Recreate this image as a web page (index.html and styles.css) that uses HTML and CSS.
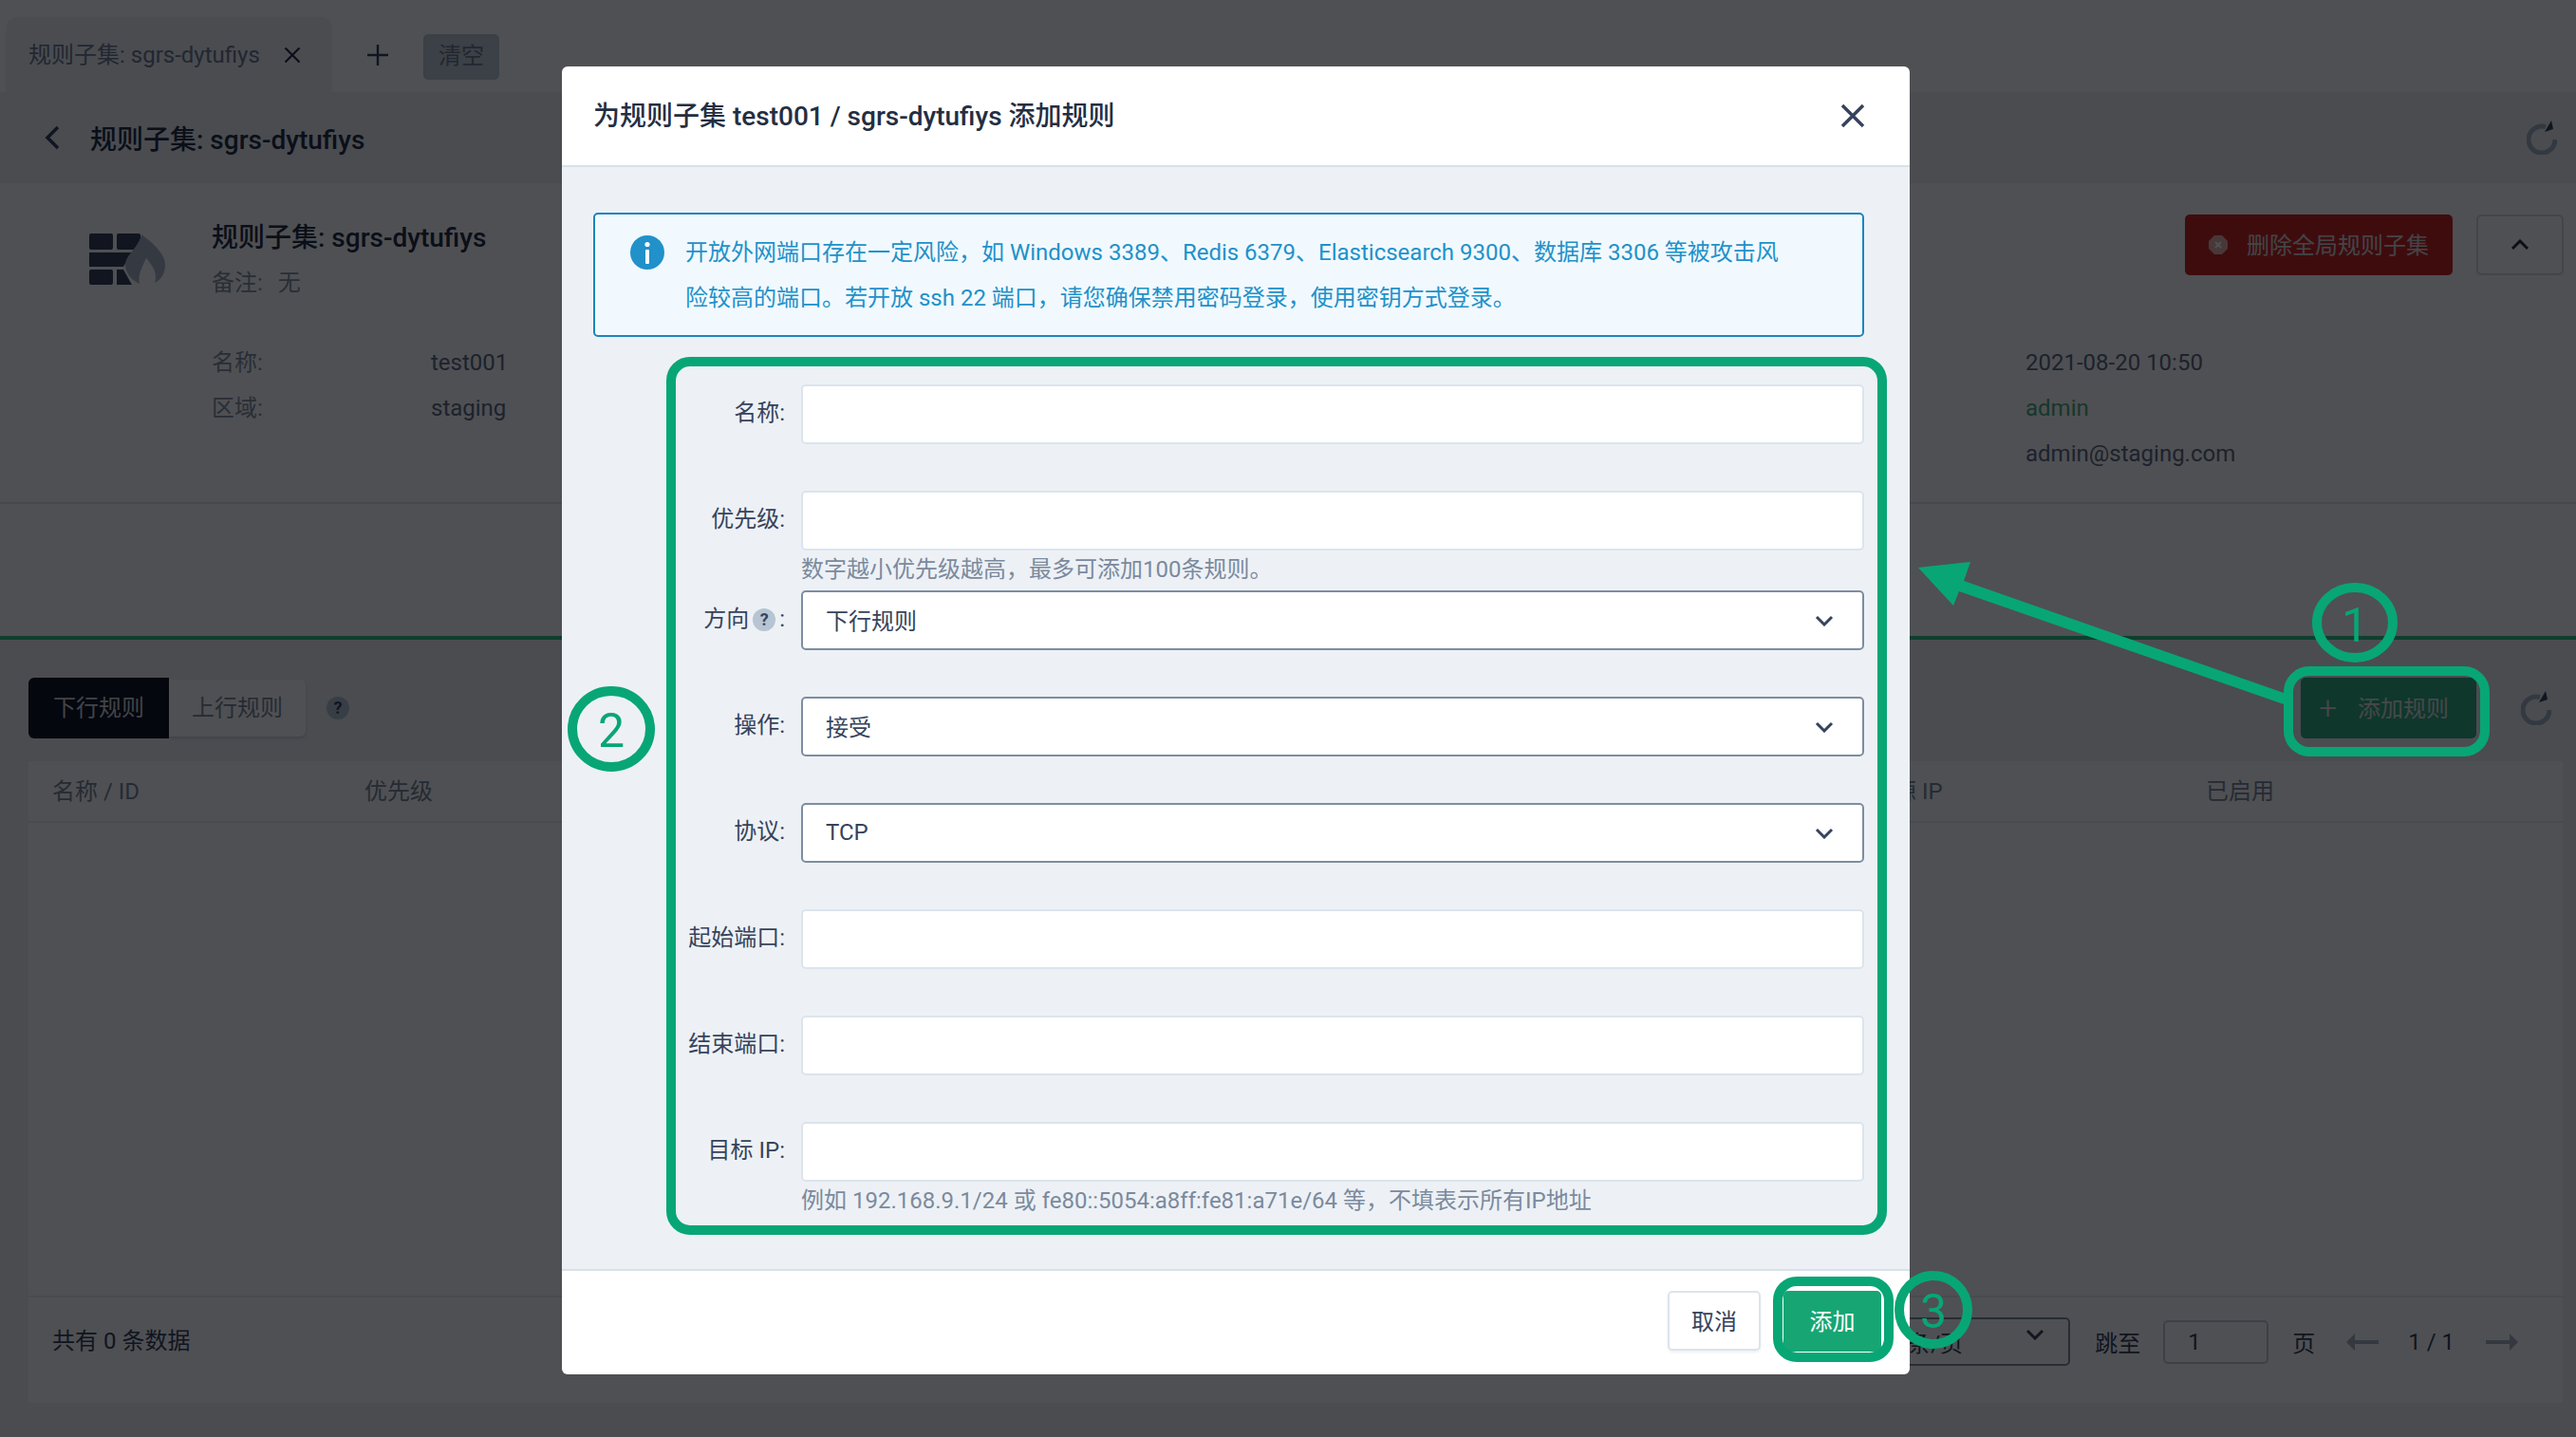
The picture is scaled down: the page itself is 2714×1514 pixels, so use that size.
FILE: index.html
```html
<!DOCTYPE html>
<html lang="zh-CN">
<head>
    <meta charset="UTF-8">
    <title>规则子集</title>
    <link rel="stylesheet" href="styles.css">
</head>
<body>

    <div class="tabbar">
        <div class="tab">
            <span>规则子集: sgrs-dytufiys</span>
            <svg class="tab-close" viewBox="0 0 24 24"><path d="M3 3 21 21M21 3 3 21"/></svg>
        </div>
        <svg class="tab-add" viewBox="0 0 24 24"><path d="M12 1V23M1 12H23"/></svg>
        <div class="tab-clear">清空</div>
    </div>

    <div class="page-head">
        <svg class="back" viewBox="0 0 18 28"><path d="M15 3 4 14 15 25"/></svg>
        <h1>规则子集: sgrs-dytufiys</h1>
        <svg class="refresh" viewBox="0 0 32 36"><path class="refresh-arc" d="M30 20A14 14 0 1 1 20 6.6"/><path class="refresh-tip" d="M26 0 19 12 28 9Z"/></svg>
    </div>

    <div class="info">
        <svg class="info-icon" viewBox="0 0 80 56">
            <g class="bricks">
                <rect x="0" y="1" width="25" height="17" rx="2"/>
                <rect x="29" y="1" width="25" height="17" rx="2"/>
                <path d="M0 21H45L36 36H0Z"/>
                <rect x="0" y="39" width="25" height="16" rx="2"/>
                <path d="M29 39H36L45 55H29Z"/>
            </g>
            <path class="flame" d="M55 2C66 10 80 22 80 34 80 44 75 50 69 53 72 44 68 36 60 27 56 36 51 44 53 54 44 50 38 42 38 34 38 24 52 16 55 2Z"/>
        </svg>
        <div class="info-main">
            <div class="info-head">
                <div>
                    <h2>规则子集: sgrs-dytufiys</h2>
                    <div class="note">备注:&nbsp; 无</div>
                </div>
                <div class="info-actions">
                    <button class="btn-danger">
                        <svg viewBox="0 0 20 20"><path class="octagon" d="M6 0H14L20 6V14L14 20H6L0 14V6Z"/><path class="octagon-x" d="M7 7 13 13M13 7 7 13"/></svg>
                        删除全局规则子集
                    </button>
                    <button class="btn-collapse"><svg viewBox="0 0 20 12"><path d="M2 10 10 2 18 10"/></svg></button>
                </div>
            </div>
            <div class="info-details">
                <div class="detail-list">
                    <span class="detail-label">名称:</span><span>test001</span>
                    <span class="detail-label">区域:</span><span>staging</span>
                </div>
                <div class="detail-right">
                    <span>2021-08-20 10:50</span>
                    <span class="green-text">admin</span>
                    <span>admin@staging.com</span>
                </div>
            </div>
        </div>
    </div>

    <div class="tab-strip"></div>

    <div class="rules">
        <div class="toolbar">
            <div class="segment">
                <div class="segment-on">下行规则</div>
                <div class="segment-off">上行规则</div>
            </div>
            <span class="help help-page">?</span>
            <button class="btn-add"><span class="plus">+</span>添加规则</button>
            <svg class="refresh" viewBox="0 0 32 36"><path class="refresh-arc" d="M30 20A14 14 0 1 1 20 6.6"/><path class="refresh-tip" d="M26 0 19 12 28 9Z"/></svg>
        </div>
        <div class="table">
            <div class="table-head">
                <span class="col-name">名称 / ID</span>
                <span class="col-priority">优先级</span>
                <span class="col-ip">源 IP</span>
                <span>已启用</span>
            </div>
            <div class="table-body"></div>
            <div class="table-foot">
                <span class="total">共有 0 条数据</span>
                <div class="pager">
                    <div class="page-size">10 条/页<svg viewBox="0 0 20 12"><path d="M2 2 10 10 18 2"/></svg></div>
                    <span class="jump-label">跳至</span>
                    <div class="jump-input">1</div>
                    <span class="jump-unit">页</span>
                    <svg class="page-arrow" viewBox="0 0 34 18"><path d="M0 9 9 0V7H34V11H9V18Z"/></svg>
                    <span class="page-count">1 / 1</span>
                    <svg class="page-arrow" viewBox="0 0 34 18"><path d="M34 9 25 0V7H0V11H25V18Z"/></svg>
                </div>
            </div>
        </div>
    </div>

    <div class="mask">
        <div class="modal">
            <div class="modal-head">
                <h3>为规则子集 test001 / sgrs-dytufiys 添加规则</h3>
                <svg class="modal-close" viewBox="0 0 26 26"><path d="M2 2 24 24M24 2 2 24"/></svg>
            </div>
            <div class="modal-body">
                <div class="alert">
                    <svg class="alert-icon" viewBox="0 0 36 36"><circle cx="18" cy="18" r="18"/><circle class="dot" cx="18" cy="9.5" r="2.6"/><rect class="dot" x="16" y="15" width="4" height="15" rx="1"/></svg>
                    <p>开放外网端口存在一定风险，如 Windows 3389、Redis 6379、Elasticsearch 9300、数据库 3306 等被攻击风险较高的端口。若开放 ssh 22 端口，请您确保禁用密码登录，使用密钥方式登录。</p>
                </div>
                <div class="form">
                    <div class="form-row">
                        <label>名称:</label>
                        <div class="form-field"><div class="input"></div></div>
                    </div>
                    <div class="form-row has-hint">
                        <label>优先级:</label>
                        <div class="form-field">
                            <div class="input"></div>
                            <div class="hint">数字越小优先级越高，最多可添加100条规则。</div>
                        </div>
                    </div>
                    <div class="form-row">
                        <label>方向<span class="help help-label">?</span>:</label>
                        <div class="form-field">
                            <div class="select">下行规则<svg viewBox="0 0 20 12"><path d="M2 2 10 10 18 2"/></svg></div>
                        </div>
                    </div>
                    <div class="form-row">
                        <label>操作:</label>
                        <div class="form-field">
                            <div class="select">接受<svg viewBox="0 0 20 12"><path d="M2 2 10 10 18 2"/></svg></div>
                        </div>
                    </div>
                    <div class="form-row">
                        <label>协议:</label>
                        <div class="form-field">
                            <div class="select">TCP<svg viewBox="0 0 20 12"><path d="M2 2 10 10 18 2"/></svg></div>
                        </div>
                    </div>
                    <div class="form-row">
                        <label>起始端口:</label>
                        <div class="form-field"><div class="input"></div></div>
                    </div>
                    <div class="form-row">
                        <label>结束端口:</label>
                        <div class="form-field"><div class="input"></div></div>
                    </div>
                    <div class="form-row has-hint">
                        <label>目标 IP:</label>
                        <div class="form-field">
                            <div class="input"></div>
                            <div class="hint">例如 192.168.9.1/24 或 fe80::5054:a8ff:fe81:a71e/64 等，不填表示所有IP地址</div>
                        </div>
                    </div>
                </div>
            </div>
            <div class="modal-foot">
                <button class="btn-cancel">取消</button>
                <button class="btn-submit">添加</button>
            </div>
        </div>
    </div>

    <!-- green marks drawn over the screenshot -->
    <svg class="marks" viewBox="0 0 2714 1514">
        <rect class="mark-line" x="707" y="381" width="1276" height="915" rx="20"/>
        <rect class="mark-line" x="2411" y="707" width="207" height="85" rx="22"/>
        <rect class="mark-line" x="1873" y="1350" width="117" height="80" rx="20"/>
        <ellipse class="mark-line" cx="2481" cy="656" rx="40" ry="37"/>
        <ellipse class="mark-line" cx="644" cy="768" rx="41" ry="40"/>
        <ellipse class="mark-line" cx="2037" cy="1380" rx="36" ry="36"/>
        <path class="mark-fill" d="M2021 598 2076 592 2069 612 2406 730V742L2064 623 2058 638Z"/>
        <text class="mark-num" x="2481" y="676">1</text>
        <text class="mark-num" x="644" y="787">2</text>
        <text class="mark-num" x="2037" y="1399">3</text>
    </svg>

</body>
</html>
```

FILE: styles.css
```css
* {
    box-sizing: border-box;
}
body {
    font-family: Roboto, "Noto Sans CJK SC", sans-serif;
    font-size: 24px;
    color: #5d6b84;
    background-color: #edf1f5;
    margin: 0;
    width: 2714px;
    height: 1514px;
    overflow: hidden;
    position: relative;
}
button {
    font: inherit;
    border: none;
    padding: 0;
}
h1, h2, h3 {
    margin: 0;
    font-size: 28px;
    font-weight: 500;
    color: #242e42;
}

/* top tabs */
.tabbar {
    height: 97px;
    padding: 18px 0 0 6px;
    background-color: #fff;
    display: flex;
    align-items: flex-start;
}
.tab {
    width: 344px;
    height: 79px;
    padding: 16px 0 0 24px;
    background-color: #edf1f5;
    border-radius: 12px 12px 0 0;
    color: #6f7c90;
    display: flex;
    align-items: flex-start;
    line-height: 48px;
}
.tab-close {
    width: 20px;
    height: 20px;
    margin: 14px 0 0 24px;
    fill: none;
    stroke: #242e42;
    stroke-width: 2.6;
}
.tab-add {
    width: 24px;
    height: 24px;
    margin: 28px 0 0 36px;
    fill: none;
    stroke: #36435c;
    stroke-width: 2.4;
}
.tab-clear {
    width: 80px;
    height: 48px;
    margin: 18px 0 0 36px;
    background-color: #bfcdd6;
    border-radius: 5px;
    text-align: center;
    line-height: 46px;
    color: #6f7c90;
}

/* page header */
.page-head {
    height: 96px;
    padding: 0 20px 0 46px;
    background-color: #edf1f5;
    display: flex;
    align-items: center;
}
.back {
    width: 18px;
    height: 28px;
    margin-right: 31px;
    fill: none;
    stroke: #36435c;
    stroke-width: 3.5;
}
.page-head h1 {
    flex: 1;
}
.refresh {
    width: 32px;
    height: 36px;
    flex: none;
}
.refresh-arc {
    fill: none;
    stroke: #a6b4c4;
    stroke-width: 5;
}
.refresh-tip {
    fill: #36435c;
}

/* summary */
.info {
    height: 338px;
    padding: 33px 13px 0 94px;
    background-color: #fff;
    border-bottom: 2px solid #e3e9ef;
    display: flex;
}
.info-icon {
    width: 80px;
    height: 56px;
    margin: 19px 49px 0 0;
    flex: none;
}
.bricks {
    fill: #36435c;
}
.flame {
    fill: #abb8c7;
}
.info-main {
    flex: 1;
}
.info-head {
    height: 96px;
    display: flex;
    justify-content: space-between;
}
.info-head h2 {
    line-height: 49px;
}
.note {
    line-height: 47px;
    color: #8592a6;
    word-spacing: 2px;
}
.info-actions {
    display: flex;
    gap: 25px;
}
.btn-danger {
    width: 282px;
    height: 64px;
    padding: 0 0 3px 25px;
    background-color: #ca2621;
    color: #d9d9dc;
    border-radius: 5px;
    display: flex;
    align-items: center;
    gap: 20px;
}
.btn-danger svg {
    width: 20px;
    height: 20px;
    margin-top: 3px;
}
.octagon {
    fill: #e8b0ad;
}
.octagon-x {
    fill: none;
    stroke: #fff;
    stroke-width: 2;
}
.btn-collapse {
    width: 92px;
    height: 64px;
    padding-bottom: 4px;
    background-color: #fff;
    border: 2px solid #d1dbe5;
    border-radius: 5px;
}
.btn-collapse svg {
    width: 20px;
    height: 12px;
    fill: none;
    stroke: #242e42;
    stroke-width: 3;
}
.info-details {
    margin-top: 36px;
    display: flex;
    justify-content: space-between;
}
.detail-list {
    display: grid;
    grid-template-columns: 231px auto;
    grid-auto-rows: 48px;
    line-height: 48px;
}
.detail-label {
    color: #8592a6;
}
.detail-right {
    width: 567px;
    display: flex;
    flex-direction: column;
    line-height: 48px;
}
.green-text {
    color: #4caf7d;
}
.tab-strip {
    height: 143px;
    background-color: #fff;
    border-bottom: 4px solid #30c587;
}

/* rules table */
.rules {
    height: 802px;
    padding-top: 40px;
    background-color: #edf1f5;
}
.toolbar {
    height: 64px;
    padding: 0 26px 0 30px;
    display: flex;
    align-items: center;
}
.segment {
    display: flex;
    height: 64px;
    align-items: center;
    color: #79879c;
}
.segment-on {
    width: 148px;
    height: 64px;
    background-color: #0d1520;
    border-radius: 6px 0 0 6px;
    text-align: center;
    line-height: 64px;
    color: #d2d6da;
}
.segment-off {
    width: 144px;
    height: 60px;
    background-color: #fff;
    border-radius: 0 6px 6px 0;
    box-shadow: 0 2px 3px rgba(36, 46, 66, 0.15);
    text-align: center;
    line-height: 60px;
}
.help {
    display: inline-block;
    width: 24px;
    height: 24px;
    border-radius: 50%;
    background-color: #b6c4d3;
    color: #36435c;
    font-size: 18px;
    font-weight: 700;
    line-height: 24px;
    text-align: center;
    vertical-align: 1px;
}
.help-page {
    margin: 0 auto 0 22px;
}
.help-label {
    margin: 0 4px;
}
.btn-add {
    width: 185px;
    height: 64px;
    margin-right: 47px;
    padding: 0 0 3px 19px;
    background-color: #30ae7f;
    color: #e0e4e2;
    border-radius: 5px;
    display: flex;
    align-items: center;
}
.plus {
    width: 41px;
    font-size: 34px;
    font-weight: 300;
    text-align: left;
}
.table {
    height: 676px;
    margin: 24px 14px 0 30px;
    background-color: #fff;
    display: flex;
    flex-direction: column;
}
.table-head {
    height: 65px;
    padding: 0 0 4px 25px;
    background-color: #fff;
    border-bottom: 2px solid #e8edf2;
    color: #79879c;
    display: flex;
    align-items: center;
}
.col-name {
    width: 329px;
}
.col-priority {
    width: 1611px;
}
.col-ip {
    width: 329px;
}
.table-body {
    height: 500px;
    border-bottom: 2px solid #e8edf2;
}
.table-foot {
    flex: 1;
    padding: 21px 47px 0 25px;
    display: flex;
    justify-content: space-between;
    align-items: flex-start;
}
.total {
    line-height: 51px;
    color: #36435c;
}
.pager {
    height: 51px;
    display: flex;
    align-items: center;
    color: #36435c;
}
.page-size {
    width: 231px;
    height: 51px;
    padding: 0 25px;
    border: 2px solid #7d8da1;
    border-radius: 5px;
    display: flex;
    justify-content: space-between;
    align-items: center;
}
.page-size svg {
    width: 20px;
    height: 12px;
    margin-bottom: 16px;
    fill: none;
    stroke: #36435c;
    stroke-width: 3;
}
.jump-label {
    margin: 0 24px 0 26px;
}
.jump-input {
    width: 111px;
    height: 46px;
    padding-left: 24px;
    border: 2px solid #c2ccd7;
    border-radius: 5px;
    line-height: 42px;
}
.jump-unit {
    margin: 0 33px 0 25px;
}
.page-arrow {
    width: 34px;
    height: 18px;
    fill: #a9b5c4;
}
.page-count {
    margin: 0 33px 0 31px;
}

/* dialog */
.mask {
    position: absolute;
    inset: 0;
    padding: 70px 0 0 592px;
    background-color: rgba(0, 2, 6, 0.69);
}
.modal {
    width: 1420px;
    height: 1378px;
    background-color: #fff;
    border-radius: 6px;
    overflow: hidden;
    display: flex;
    flex-direction: column;
    color: #36435c;
}
.modal-head {
    height: 106px;
    padding: 0 47px 5px 33px;
    border-bottom: 2px solid #d8e1ea;
    display: flex;
    justify-content: space-between;
    align-items: center;
    flex: none;
}
.modal-close {
    width: 26px;
    height: 26px;
    margin-top: 5px;
    fill: none;
    stroke: #36435c;
    stroke-width: 3.5;
}
.modal-body {
    flex: 1;
    padding: 48px 48px 0 33px;
    background-color: #edf1f5;
}
.alert {
    height: 131px;
    padding: 16px 70px 0 37px;
    background-color: #f1f9ff;
    border: 2px solid #1c85bb;
    border-radius: 5px;
    display: flex;
    gap: 22px;
    color: #2191c9;
}
.alert-icon {
    width: 36px;
    height: 36px;
    margin-top: 6px;
    flex: none;
    fill: #2191c9;
}
.dot {
    fill: #fff;
}
.alert p {
    margin: 0;
    line-height: 48px;
}
.form {
    margin-top: 50px;
}
.form-row {
    display: flex;
    gap: 17px;
    margin-bottom: 49px;
}
.form-row.has-hint {
    margin-bottom: 0;
}
.form-row label {
    width: 202px;
    height: 60px;
    flex: none;
    text-align: right;
    line-height: 60px;
    color: #36435c;
}
.form-field {
    flex: 1;
}
.input {
    height: 63px;
    background-color: #fff;
    border: 2px solid #dbe4ee;
    border-radius: 5px;
}
.select {
    height: 63px;
    padding: 0 30px 2px 24px;
    background-color: #fff;
    border: 2px solid #7d8da1;
    border-radius: 5px;
    display: flex;
    justify-content: space-between;
    align-items: center;
}
.select svg {
    width: 20px;
    height: 12px;
    margin-top: 2px;
    fill: none;
    stroke: #36435c;
    stroke-width: 3;
}
.hint {
    height: 42px;
    line-height: 41px;
    color: #7b8a9e;
}
.modal-foot {
    height: 111px;
    padding: 21px 30px 0 0;
    border-top: 2px solid #d8e1ea;
    display: flex;
    justify-content: flex-end;
    gap: 24px;
    flex: none;
}
.btn-cancel {
    width: 98px;
    height: 63px;
    padding-bottom: 3px;
    background-color: #fff;
    color: #36435c;
    border: 2px solid #dbe4ee;
    border-radius: 5px;
    box-shadow: 0 2px 3px rgba(36, 46, 66, 0.08);
}
.btn-submit {
    width: 103px;
    height: 64px;
    padding-bottom: 3px;
    background-color: #17a673;
    color: #fff;
    border-radius: 5px;
}

/* annotations */
.marks {
    position: absolute;
    top: 0;
    left: 0;
    width: 2714px;
    height: 1514px;
}
.mark-line {
    fill: none;
    stroke: #08a675;
    stroke-width: 10;
}
.mark-fill {
    fill: #08a675;
}
.mark-num {
    fill: #08a675;
    font-size: 50px;
    font-weight: 400;
    text-anchor: middle;
}
```
